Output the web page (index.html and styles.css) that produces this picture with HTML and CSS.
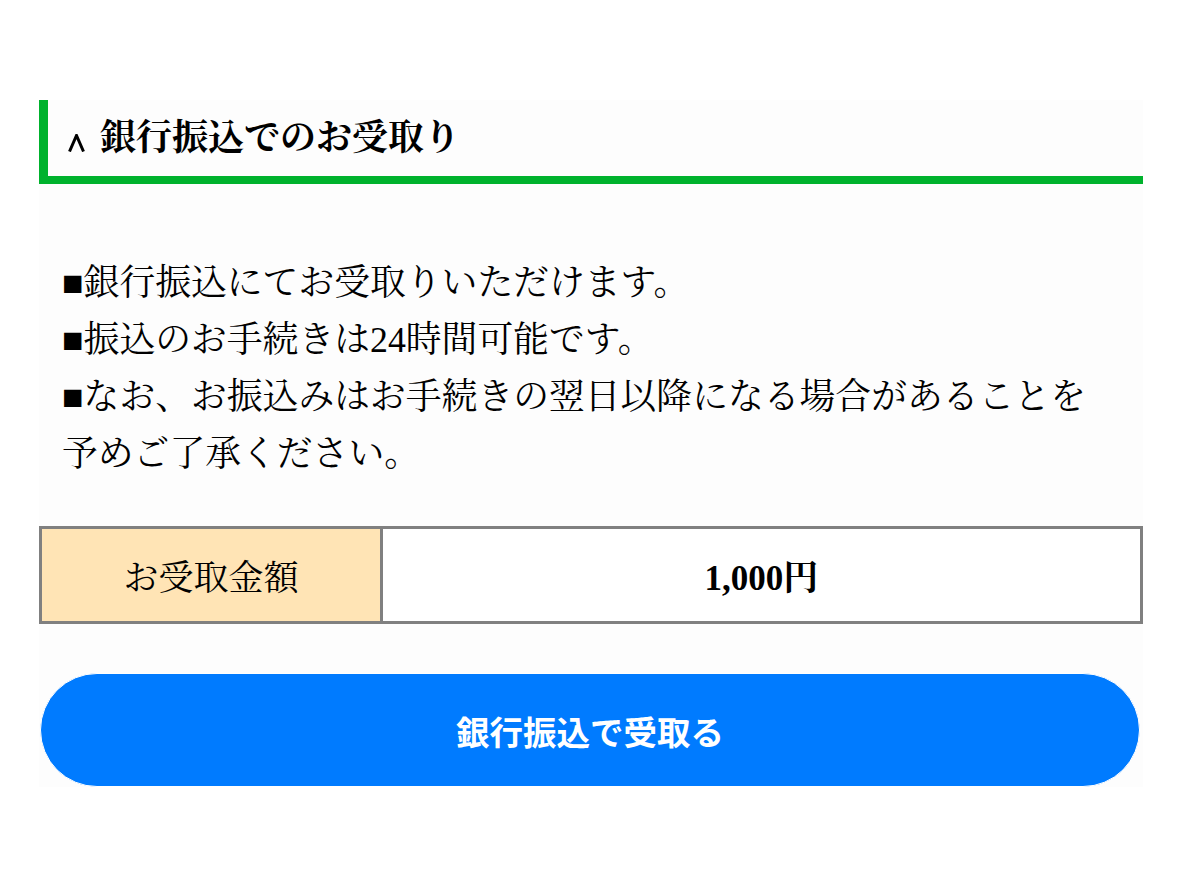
FILE: index.html
```html
<!DOCTYPE html>
<html lang="ja">

<head>
  <meta charset="UTF-8">
  <meta name="viewport" content="width=device-width, initial-scale=1.0">
  <title>銀行振込でのお受取り</title>
  <link rel="stylesheet" href="styles.css">
</head>

<body>
  <div class="wrapper">
    <h2 class="section-title">
      <svg class="caret" width="17" height="18" viewBox="0 0 17 18">
        <polyline points="1.5,17.5 8.5,1.5 15.5,17.5" fill="none" stroke="#000" stroke-width="3" />
      </svg>銀行振込でのお受取り
    </h2>

    <p class="notice">
      ■銀行振込にてお受取りいただけます。<br>
      ■振込のお手続きは24時間可能です。<br>
      ■なお、お振込みはお手続きの翌日以降になる場合があることを予めご了承ください。
    </p>

    <table class="amount">
      <tr>
        <th>お受取金額</th>
        <td>1,000円</td>
      </tr>
    </table>

    <button class="submit" type="button">銀行振込で受取る</button>
  </div>
</body>

</html>
```

FILE: styles.css
```css
body {
  margin: 0;
  background-color: #ffffff;
  font-family: "Liberation Serif", "Noto Serif CJK JP", serif;
  color: #000000;
}

.wrapper {
  background-color: #fdfdfd;
  margin: 100px 40px 0 39px;
}

.section-title {
  border-left: 9px solid #00b22d;
  border-bottom: 8px solid #00b22d;
  font-size: 36px;
  font-weight: bold;
  height: 76px;
  line-height: 76px;
  margin: 0;
  padding-left: 20px;
}

.caret {
  margin-right: 15px;
  vertical-align: -2px;
}

.notice {
  font-size: 35.8px;
  line-height: 57px;
  margin: 71px 0 0;
  padding: 0 50px 0 23px;
}

.amount {
  border-collapse: collapse;
  margin-top: 43px;
  width: 100%;
}

.amount th,
.amount td {
  border: 3px solid #808080;
  font-size: 35px;
  height: 92px;
  padding: 0;
  text-align: center;
}

.amount th {
  background-color: #ffe4b5;
  font-weight: normal;
  width: 338px;
}

.amount td {
  background-color: #ffffff;
  font-weight: bold;
}

.submit {
  background-color: #007bff;
  border: 1px solid #ffffff;
  border-radius: 57px;
  color: #ffffff;
  cursor: pointer;
  display: block;
  font-family: "Noto Sans CJK JP", sans-serif;
  font-size: 33.5px;
  font-weight: bold;
  height: 114px;
  margin: 49px 0 0 1px;
  width: 1100px;
}
```
